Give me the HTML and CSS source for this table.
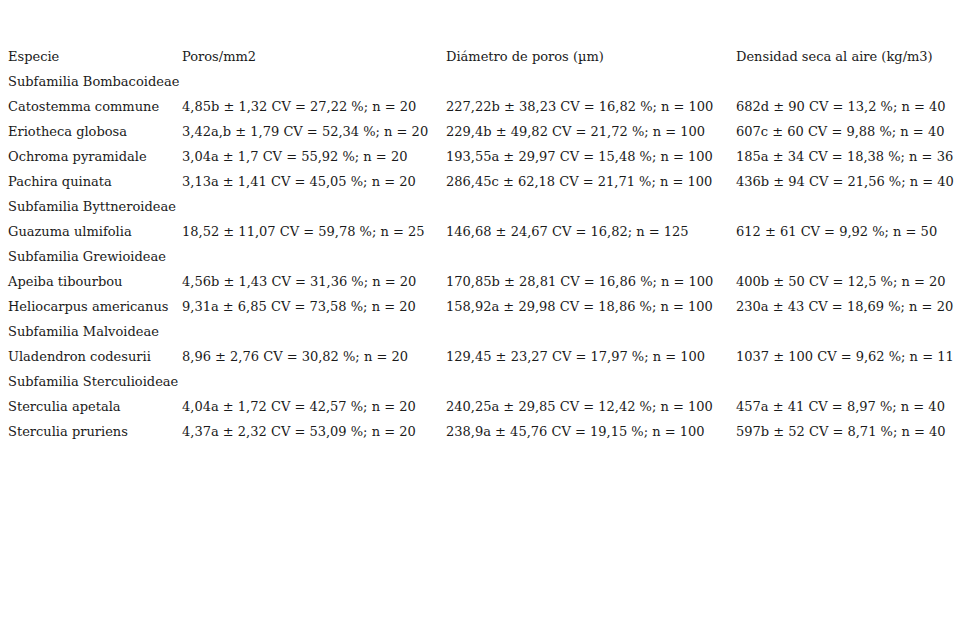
FILE: index.html
```html
<!DOCTYPE html>
<html lang="es">
<head>
<meta charset="utf-8">
<title>Tabla</title>
<link rel="stylesheet" href="styles.css">
</head>
<body>
<table class="data">
<colgroup><col class="c1"><col class="c2"><col class="c3"><col class="c4"></colgroup>
<tr><td>Especie</td><td>Poros/mm2</td><td>Diámetro de poros (µm)</td><td>Densidad seca al aire (kg/m3)</td></tr>
<tr><td colspan="4">Subfamilia Bombacoideae</td></tr>
<tr><td>Catostemma commune</td><td>4,85b ± 1,32 CV = 27,22 %; n = 20</td><td>227,22b ± 38,23 CV = 16,82 %; n = 100</td><td>682d ± 90 CV = 13,2 %; n = 40</td></tr>
<tr><td>Eriotheca globosa</td><td>3,42a,b ± 1,79 CV = 52,34 %; n = 20</td><td>229,4b ± 49,82 CV = 21,72 %; n = 100</td><td>607c ± 60 CV = 9,88 %; n = 40</td></tr>
<tr><td>Ochroma pyramidale</td><td>3,04a ± 1,7 CV = 55,92 %; n = 20</td><td>193,55a ± 29,97 CV = 15,48 %; n = 100</td><td>185a ± 34 CV = 18,38 %; n = 36</td></tr>
<tr><td>Pachira quinata</td><td>3,13a ± 1,41 CV = 45,05 %; n = 20</td><td>286,45c ± 62,18 CV = 21,71 %; n = 100</td><td>436b ± 94 CV = 21,56 %; n = 40</td></tr>
<tr><td colspan="4">Subfamilia Byttneroideae</td></tr>
<tr><td>Guazuma ulmifolia</td><td>18,52 ± 11,07 CV = 59,78 %; n = 25</td><td>146,68 ± 24,67 CV = 16,82; n = 125</td><td>612 ± 61 CV = 9,92 %; n = 50</td></tr>
<tr><td colspan="4">Subfamilia Grewioideae</td></tr>
<tr><td>Apeiba tibourbou</td><td>4,56b ± 1,43 CV = 31,36 %; n = 20</td><td>170,85b ± 28,81 CV = 16,86 %; n = 100</td><td>400b ± 50 CV = 12,5 %; n = 20</td></tr>
<tr><td>Heliocarpus americanus</td><td>9,31a ± 6,85 CV = 73,58 %; n = 20</td><td>158,92a ± 29,98 CV = 18,86 %; n = 100</td><td>230a ± 43 CV = 18,69 %; n = 20</td></tr>
<tr><td colspan="4">Subfamilia Malvoideae</td></tr>
<tr><td>Uladendron codesurii</td><td>8,96 ± 2,76 CV = 30,82 %; n = 20</td><td>129,45 ± 23,27 CV = 17,97 %; n = 100</td><td>1037 ± 100 CV = 9,62 %; n = 11</td></tr>
<tr><td colspan="4">Subfamilia Sterculioideae</td></tr>
<tr><td>Sterculia apetala</td><td>4,04a ± 1,72 CV = 42,57 %; n = 20</td><td>240,25a ± 29,85 CV = 12,42 %; n = 100</td><td>457a ± 41 CV = 8,97 %; n = 40</td></tr>
<tr><td>Sterculia pruriens</td><td>4,37a ± 2,32 CV = 53,09 %; n = 20</td><td>238,9a ± 45,76 CV = 19,15 %; n = 100</td><td>597b ± 52 CV = 8,71 %; n = 40</td></tr>
</table>
</body>
</html>
```
FILE: styles.css
```css
html, body {
  margin: 0;
  background: #fff;
}
body {
  padding: 44px 0 0 8px;
  font-family: "DejaVu Serif", "Liberation Serif", serif;
  font-size: 13px;
  color: #1a1a1a;
}
.data {
  border-collapse: collapse;
  table-layout: fixed;
  width: 963px;
}
.c1 { width: 174px; }
.c2 { width: 264px; }
.c3 { width: 290px; }
.c4 { width: 235px; }
.data td {
  padding: 0;
  height: 25px;
  white-space: nowrap;
  vertical-align: middle;
}
```
